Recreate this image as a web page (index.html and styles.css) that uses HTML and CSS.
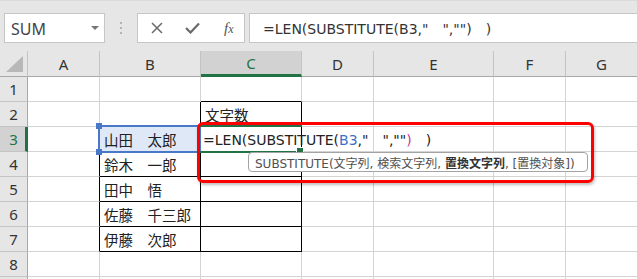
FILE: index.html
```html
<!DOCTYPE html>
<html lang="ja">
<head>
<meta charset="utf-8">
<link rel="stylesheet" href="styles.css">
</head>
<body>
<div class="toolbar">
  <div class="namebox">
    <span>SUM</span>
    <svg class="dd" width="8" height="5" viewBox="0 0 8 5"><polygon points="0,0 8,0 4,4" fill="#767676"/></svg>
  </div>
  <div class="grip">
    <svg width="2" height="12" viewBox="0 0 2 12"><rect x="0" y="0" width="2" height="2" fill="#b4b4b4"/><rect x="0" y="5" width="2" height="2" fill="#b4b4b4"/><rect x="0" y="10" width="2" height="2" fill="#b4b4b4"/></svg>
  </div>
  <div class="fxbox">
    <svg class="ic" width="12" height="12" viewBox="0 0 12 12"><path d="M1 1 L11 11 M11 1 L1 11" stroke="#6a6a6a" stroke-width="1.5" fill="none"/></svg>
    <svg class="ic" width="15" height="12" viewBox="0 0 15 12"><path d="M1 6 L5.5 10.5 L14 1.5" stroke="#6a6a6a" stroke-width="2.2" fill="none"/></svg>
    <span class="fx">f<span class="x">x</span></span>
  </div>
  <div class="formula"><span>=LEN(SUBSTITUTE(B3,"　","")　)</span></div>
</div>

<div class="sheet">
  <div class="h corner"><svg width="18" height="17" viewBox="0 0 18 17"><polygon points="17,0 17,16 0,16" fill="#b8b8b8"/></svg></div>
  <div class="h">A</div>
  <div class="h">B</div>
  <div class="h hl">C</div>
  <div class="h">D</div>
  <div class="h">E</div>
  <div class="h">F</div>
  <div class="h">G</div>

  <div class="rh">1</div>
  <div class="c"></div><div class="c"></div><div class="c bbk"></div><div class="c"></div><div class="c"></div><div class="c"></div><div class="c"></div>

  <div class="rh">2</div>
  <div class="c"></div><div class="c brk bbk"></div><div class="c brk bbk">文字数</div><div class="c"></div><div class="c"></div><div class="c"></div><div class="c"></div>

  <div class="rh rhl">3</div>
  <div class="c brk"></div>
  <div class="c brk bbk selcell">
    <div class="sel"><i class="hd tl"></i><i class="hd bl"></i></div>
    <span class="tx">山田　太郎</span>
  </div>
  <div class="c brk bbk edit">
    <div class="act"><i class="fh"></i></div>
    <span class="ftext">=LEN(SUBSTITUTE(<span class="ref">B3</span>,"　",""<span class="par2">)</span>　)</span>
  </div>
  <div class="c"></div><div class="c"></div><div class="c"></div><div class="c"></div>

  <div class="rh">4</div>
  <div class="c brk"></div><div class="c brk bbk">鈴木　一郎</div><div class="c brk bbk"></div><div class="c"></div><div class="c"></div><div class="c"></div><div class="c"></div>

  <div class="rh">5</div>
  <div class="c brk"></div><div class="c brk bbk">田中　悟</div><div class="c brk bbk"></div><div class="c"></div><div class="c"></div><div class="c"></div><div class="c"></div>

  <div class="rh">6</div>
  <div class="c brk"></div><div class="c brk bbk">佐藤　千三郎</div><div class="c brk bbk"></div><div class="c"></div><div class="c"></div><div class="c"></div><div class="c"></div>

  <div class="rh">7</div>
  <div class="c brk"></div><div class="c brk bbk">伊藤　次郎</div><div class="c brk bbk"></div><div class="c"></div><div class="c"></div><div class="c"></div><div class="c"></div>

  <div class="rh">8</div>
  <div class="c"></div><div class="c"></div><div class="c"></div><div class="c"></div><div class="c"></div><div class="c"></div><div class="c"></div>

  <div class="rh"></div>
  <div class="c"></div><div class="c"></div><div class="c"></div><div class="c"></div><div class="c"></div><div class="c"></div><div class="c"></div>

  <div class="redbox"></div>
  <div class="tip">SUBSTITUTE(文字列, 検索文字列, <b>置換文字列</b>, [置換対象])</div>
</div>
</body>
</html>
```

FILE: styles.css
```css
html, body {
  margin: 0;
  padding: 0;
}
body {
  width: 637px;
  height: 279px;
  overflow: hidden;
  background: #fff;
  font-family: "Noto Sans CJK JP", "Noto Sans", sans-serif;
  color: #222;
}

/* ---------- toolbar ---------- */
.toolbar {
  height: 51px;
  box-sizing: border-box;
  background: #e6e6e6;
  display: flex;
  align-items: flex-start;
  padding: 12px 0 0 4px;
  border-top: 1px solid #dadada;
}
.namebox {
  width: 101px;
  height: 30px;
  box-sizing: border-box;
  background: #fff;
  border: 1px solid #c6c6c6;
  display: flex;
  align-items: center;
  justify-content: space-between;
  padding: 0 5px 0 6px;
  font-family: "Noto Sans", sans-serif;
  font-size: 16px;
  color: #444;
}
.namebox span { margin-top: 1px; }
.grip {
  width: 32px;
  height: 30px;
  display: flex;
  align-items: center;
  justify-content: center;
}
.fxbox {
  width: 108px;
  height: 30px;
  box-sizing: border-box;
  background: #fff;
  border: 1px solid #c6c6c6;
  display: flex;
  align-items: center;
  padding-left: 13px;
  gap: 22px;
}
.fx {
  font-family: "Liberation Serif", serif;
  font-style: italic;
  font-size: 15px;
  color: #555;
  margin-left: 2px;
}
.fx .x { font-size: 12px; }
.formula {
  flex: 1;
  margin-left: 4px;
  height: 30px;
  box-sizing: border-box;
  background: #fff;
  border: 1px solid #c6c6c6;
  border-right: none;
  display: flex;
  align-items: center;
  padding-left: 13px;
  font-family: "DejaVu Sans", "Noto Sans CJK JP", sans-serif;
  font-size: 14px;
  color: #333;
  white-space: pre;
}

/* ---------- sheet ---------- */
.sheet {
  position: relative;
  display: grid;
  grid-template-columns: 28px 72px 101px 101px 72px 120px 72px 72px;
  grid-template-rows: 26px repeat(9, 25px);
}
.h, .rh, .c {
  box-sizing: border-box;
  display: flex;
  align-items: center;
  white-space: nowrap;
}
.h {
  background: #e6e6e6;
  border-right: 1px solid #c4c4c4;
  border-bottom: 1px solid #a8a8a8;
  justify-content: center;
  font-family: "Noto Sans", sans-serif;
  font-size: 15px;
  color: #333;
}
.h.corner {
  justify-content: flex-end;
  align-items: flex-end;
  padding: 0 3px 3px 0;
}
.h.hl {
  background: #d2d2d2;
  border-bottom: 3px solid #217346;
  color: #217346;
}
.rh {
  background: #e6e6e6;
  border-right: 1px solid #a8a8a8;
  border-bottom: 1px solid #c4c4c4;
  justify-content: center;
  font-family: "Noto Sans", sans-serif;
  font-size: 15px;
  color: #333;
}
.rh.rhl {
  background: #d2d2d2;
  border-right: 3px solid #217346;
  color: #217346;
  padding-left: 2px;
}
.c {
  border-right: 1px solid #d4d4d4;
  border-bottom: 1px solid #d4d4d4;
  padding-left: 4px;
  font-size: 14.5px;
  color: #222;
}
.c.brk { border-right-color: #000; }
.c.bbk { border-bottom-color: #000; }

.selcell { position: relative; }
.selcell .tx { position: relative; z-index: 2; }
.sel {
  position: absolute;
  left: -2px;
  top: -2px;
  right: -1px;
  bottom: -2px;
  border: 2px solid #4a78c8;
  background: #dfe8f6;
  z-index: 1;
}
.hd {
  position: absolute;
  width: 6px;
  height: 6px;
  background: #4a78c8;
}
.hd.tl { left: -4px; top: -4px; }
.hd.bl { left: -4px; bottom: -4px; }

.edit {
  position: relative;
  padding-left: 2px;
}
.act {
  position: absolute;
  left: -2px;
  top: -2px;
  right: -1px;
  bottom: -2px;
  border-top: 2px solid #217346;
  border-bottom: 2px solid #217346;
  z-index: 1;
}
.fh {
  position: absolute;
  right: -2px;
  bottom: -4px;
  width: 6px;
  height: 6px;
  background: #217346;
  border: 1px solid #fff;
}
.ftext {
  position: relative;
  z-index: 3;
  font-family: "DejaVu Sans", "Noto Sans CJK JP", sans-serif;
  font-size: 14px;
  color: #222;
  white-space: pre;
}
.ftext .ref { color: #3d6fc6; }
.ftext .par2 { color: #c2399c; }

.redbox {
  position: absolute;
  left: 197px;
  top: 71px;
  width: 397px;
  height: 61px;
  box-sizing: border-box;
  border: 3px solid #ff0000;
  border-radius: 6px;
  box-shadow: 1px 2px 3px rgba(0, 0, 0, 0.25);
  z-index: 5;
}
.tip {
  position: absolute;
  left: 248px;
  top: 101px;
  width: 340px;
  height: 20px;
  box-sizing: border-box;
  background: #fff;
  border: 1px solid #a3a3a3;
  border-radius: 4px;
  padding-left: 6px;
  display: flex;
  align-items: center;
  font-family: "DejaVu Sans", "Noto Sans CJK JP", sans-serif;
  font-size: 12px;
  color: #505050;
  white-space: pre;
  z-index: 4;
}
.tip b { color: #333; }
```
